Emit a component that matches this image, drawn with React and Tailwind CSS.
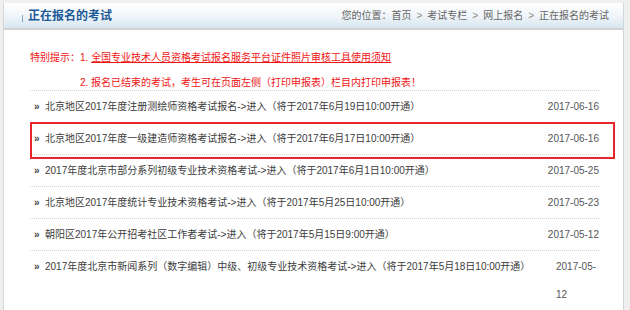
import React from "react";

const rows = [
  { t: "北京地区2017年度注册测绘师资格考试报名->进入（将于2017年6月19日10:00开通）", d: "2017-06-16" },
  { t: "北京地区2017年度一级建造师资格考试报名->进入（将于2017年6月17日10:00开通）", d: "2017-06-16" },
  { t: "2017年度北京市部分系列初级专业技术资格考试->进入（将于2017年6月1日10:00开通）", d: "2017-05-25" },
  { t: "北京地区2017年度统计专业技术资格考试->进入（将于2017年5月25日10:00开通）", d: "2017-05-23" },
  { t: "朝阳区2017年公开招考社区工作者考试->进入（将于2017年5月15日9:00开通）", d: "2017-05-12" },
  { t: "2017年度北京市新闻系列（数字编辑）中级、初级专业技术资格考试->进入（将于2017年5月18日10:00开通）", d: "2017-05-12", wrap: true },
];

const font = { fontFamily: '"Liberation Sans", "Noto Sans CJK SC", sans-serif' };

function Sep() {
  return <span className="mx-[5px] text-[#888]">&gt;</span>;
}

export default function App() {
  return (
    <div
      className="relative w-[630px] h-[310px] bg-[#efefef] overflow-hidden pt-[3px] pl-[3px] pr-[6px]"
      style={font}
    >
      <div className="h-[320px] bg-white border-l border-r border-[#d4d4d4]">
        <div className="h-[27px] flex items-center justify-between bg-gradient-to-b from-[#ffffff] via-[#f1f6fa] to-[#d7e5ef] border-b-2 border-[#d2d2d2] pl-[18px] pr-[14px]">
          <div className="flex items-center">
            <span className="w-[1px] h-[7px] bg-[#7fa7cc] mt-[6px] mr-[5px]" />
            <span className="text-[12px] font-bold text-[#1d5a97] leading-none">正在报名的考试</span>
          </div>
          <div className="text-[10px] text-[#666] leading-none">
            您的位置：首页<Sep />考试专栏<Sep />网上报名<Sep />正在报名的考试
          </div>
        </div>

        <div className="pt-[15px] pl-[26px]">
          <div className="text-[10px] text-[#f01414] leading-[25px]">
            <div className="flex">
              <span className="w-[50px]">特别提示：</span>
              <span>
                1. <span className="underline">全国专业技术人员资格考试报名服务平台证件照片审核工具使用须知</span>
              </span>
            </div>
            <div className="pl-[50px]">2. 报名已结束的考试，考生可在页面左侧（打印申报表）栏目内打印申报表！</div>
          </div>

          <div className="w-[569px] border-t border-dotted border-[#cfcfcf] mt-[-5px]">
            {rows.map((r, i) => (
              <div
                key={i}
                className="flex items-start justify-between border-b border-dotted border-[#cfcfcf] pt-[2px] pb-[1px] text-[10px] leading-[28px]"
              >
                <div className="flex text-[#3c3c3c]">
                  <span className="w-[15px] pl-[4px] text-[#444] font-bold">»</span>
                  <span>{r.t}</span>
                </div>
                {r.wrap ? (
                  <div className="w-[43px] text-[#555]">{r.d}</div>
                ) : (
                  <div className="whitespace-nowrap text-[#555]">{r.d}</div>
                )}
              </div>
            ))}
          </div>
        </div>
      </div>
      <div className="absolute left-[30px] top-[122px] w-[585px] h-[37px] border-2 border-[#e8262a]" />
    </div>
  );
}
